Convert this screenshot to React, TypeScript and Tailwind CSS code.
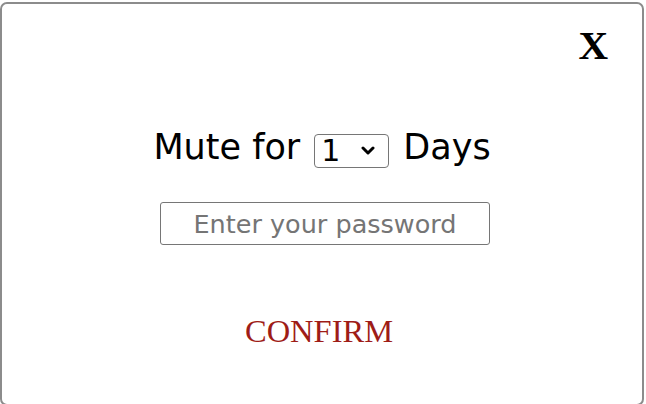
import { useState } from "react";

export default function App() {
  const [days, setDays] = useState("1");
  const [password, setPassword] = useState("");

  return (
    <div className="w-[646px] h-[404px] bg-white overflow-hidden">
      <div className="mt-[2px] w-[644px] h-[404px] border-2 border-[#8c8c8c] rounded-[7px] bg-white flex flex-col">
        {/* close */}
        <div className="flex justify-end pt-[21px] pr-[34px]">
          <button className="text-[41px] leading-none font-bold text-black font-['Liberation_Serif',serif]">
            X
          </button>
        </div>

        {/* mute row */}
        <div className="mt-[64px] flex items-start justify-center gap-[14px] font-['DejaVu_Sans',sans-serif] text-black">
          <span className="text-[35px] leading-[35px]">Mute for</span>
          <div className="relative mt-[4px]">
            <select
              value={days}
              onChange={(e) => setDays(e.target.value)}
              className="appearance-none w-[75px] h-[34px] border border-[#767676] rounded-[4px] bg-white pl-[6px] text-[30px] leading-none text-black font-['DejaVu_Sans',sans-serif]"
            >
              {[1, 2, 3, 4, 5, 6, 7].map((d) => (
                <option key={d} value={d}>
                  {d}
                </option>
              ))}
            </select>
            <svg
              className="absolute right-[14px] top-[12px] pointer-events-none"
              width="14"
              height="9"
              viewBox="0 0 14 9"
              fill="none"
            >
              <path d="M2 2L7 7L12 2" stroke="black" strokeWidth="3" strokeLinecap="round" strokeLinejoin="round" />
            </svg>
          </div>
          <span className="text-[35px] leading-[35px]">Days</span>
        </div>

        {/* password */}
        <div className="mt-[34px] flex justify-center pl-[6px]">
          <input
            type="password"
            value={password}
            onChange={(e) => setPassword(e.target.value)}
            placeholder="Enter your password"
            className="w-[330px] h-[43px] border border-[#767676] rounded-[3px] text-center text-[25.5px] font-['DejaVu_Sans',sans-serif] placeholder:text-[#757575] outline-none"
          />
        </div>

        {/* confirm */}
        <div className="mt-[70px] flex justify-center pr-[6px]">
          <button className="text-[32.5px] leading-none text-[#9e1c17] font-['Liberation_Serif',serif]">
            CONFIRM
          </button>
        </div>
      </div>
    </div>
  );
}
